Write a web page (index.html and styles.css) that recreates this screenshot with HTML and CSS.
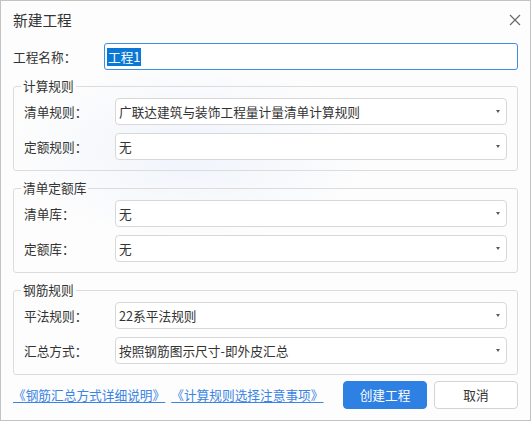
FILE: index.html
```html
<!DOCTYPE html>
<html lang="zh-CN">
<head>
<meta charset="utf-8">
<title>新建工程</title>
<link rel="stylesheet" href="styles.css">
</head>
<body>
<div class="window">
  <div class="titlebar">
    <span class="title">新建工程</span>
    <span class="close">
      <svg width="12" height="12" viewBox="0 0 12 12"><path d="M1 1 L11 11 M11 1 L1 11" stroke="#6a6a6a" stroke-width="1.2" fill="none"/></svg>
    </span>
  </div>

  <div class="name-row">
    <span class="name-label">工程名称：</span>
    <div class="name-input"><span class="selected">工程1</span></div>
  </div>

  <fieldset class="group">
    <legend>计算规则</legend>
    <div class="row">
      <span class="row-label">清单规则：</span>
      <div class="select"><span class="value">广联达建筑与装饰工程量计量清单计算规则</span><i class="arrow"></i></div>
    </div>
    <div class="row">
      <span class="row-label">定额规则：</span>
      <div class="select"><span class="value">无</span><i class="arrow"></i></div>
    </div>
  </fieldset>

  <fieldset class="group">
    <legend>清单定额库</legend>
    <div class="row">
      <span class="row-label">清单库：</span>
      <div class="select"><span class="value">无</span><i class="arrow"></i></div>
    </div>
    <div class="row">
      <span class="row-label">定额库：</span>
      <div class="select"><span class="value">无</span><i class="arrow"></i></div>
    </div>
  </fieldset>

  <fieldset class="group">
    <legend>钢筋规则</legend>
    <div class="row">
      <span class="row-label">平法规则：</span>
      <div class="select"><span class="value">22系平法规则</span><i class="arrow"></i></div>
    </div>
    <div class="row">
      <span class="row-label">汇总方式：</span>
      <div class="select"><span class="value">按照钢筋图示尺寸-即外皮汇总</span><i class="arrow"></i></div>
    </div>
  </fieldset>

  <div class="footer">
    <a class="link" href="#">《钢筋汇总方式详细说明》</a>
    <a class="link" href="#">《计算规则选择注意事项》</a>
    <span class="spacer"></span>
    <button class="btn primary">创建工程</button>
    <button class="btn">取消</button>
  </div>
</div>
</body>
</html>
```

FILE: styles.css
```css
* { box-sizing: border-box; }

html, body {
  margin: 0;
  padding: 0;
}

body {
  font-family: "Noto Sans CJK SC", "Noto Sans", "Liberation Sans", sans-serif;
  font-size: 12.7px;
  color: #333;
  background: #fff;
}

.window {
  width: 531px;
  height: 421px;
  border: 1px solid #c3c3c3;
  padding: 0 12px;
  background:
    radial-gradient(ellipse 180px 90px at 190px 150px, rgba(228, 236, 250, 0.55), rgba(255, 255, 255, 0) 100%),
    #fdfdfd;
  display: flex;
  flex-direction: column;
}

.titlebar {
  height: 38px;
  display: flex;
  align-items: center;
  justify-content: space-between;
}

.title {
  font-size: 14.7px;
  line-height: 18px;
  color: #333;
}

.close {
  width: 12px;
  height: 12px;
  display: flex;
  margin-right: -3px;
}

.close svg { display: block; }

.name-row {
  margin-top: 4px;
  height: 27px;
  display: flex;
  align-items: center;
}

.name-label {
  width: 91px;
  flex: none;
  line-height: 18px;
}

.name-input {
  flex: 1;
  height: 27px;
  border: 1px solid #3d8ee8;
  border-radius: 3px;
  background: #fff;
  padding: 0 2px;
  display: flex;
  align-items: center;
}

.selected {
  background: #0a78d6;
  color: #fff;
  line-height: 18px;
  padding: 0 1px;
}

.group {
  margin: 8px 0 0 0;
  padding: 4px 10px 10px 10px;
  border: 1px solid #dcdcdc;
  border-radius: 3px;
  min-width: 0;
}

.group + .group {
  margin-top: 9px;
}

.group legend {
  padding: 0 2px;
  margin-left: -3px;
  line-height: 16px;
  color: #333;
}

.row {
  display: flex;
  align-items: center;
  height: 27px;
}

.row + .row {
  margin-top: 8px;
}

.row-label {
  width: 91px;
  flex: none;
  line-height: 18px;
}

.select {
  flex: 1;
  height: 27px;
  border: 1px solid #d8d8d8;
  border-radius: 4px;
  background: #fff;
  padding: 0 6px 0 3px;
  display: flex;
  align-items: center;
  justify-content: space-between;
}

.value {
  line-height: 18px;
  color: #333;
}

.arrow {
  width: 0;
  height: 0;
  border-left: 2.5px solid transparent;
  border-right: 2.5px solid transparent;
  border-top: 3px solid #5a5a5a;
}

.footer {
  margin-top: 6px;
  height: 28px;
  display: flex;
  align-items: center;
}

.link {
  color: #3a84e4;
  text-decoration: underline;
  text-underline-offset: 2px;
  line-height: 18px;
}

.link + .link {
  margin-left: 6px;
}

.spacer { flex: 1; }

.btn {
  width: 84px;
  height: 28px;
  border: 1px solid #d4d4d4;
  border-radius: 4px;
  background: #fff;
  color: #333;
  font-family: inherit;
  font-size: 12.7px;
  padding: 0;
  line-height: 18px;
}

.btn.primary {
  background: #2f80e3;
  border-color: #2f80e3;
  color: #fff;
  margin-right: 7px;
}
```
